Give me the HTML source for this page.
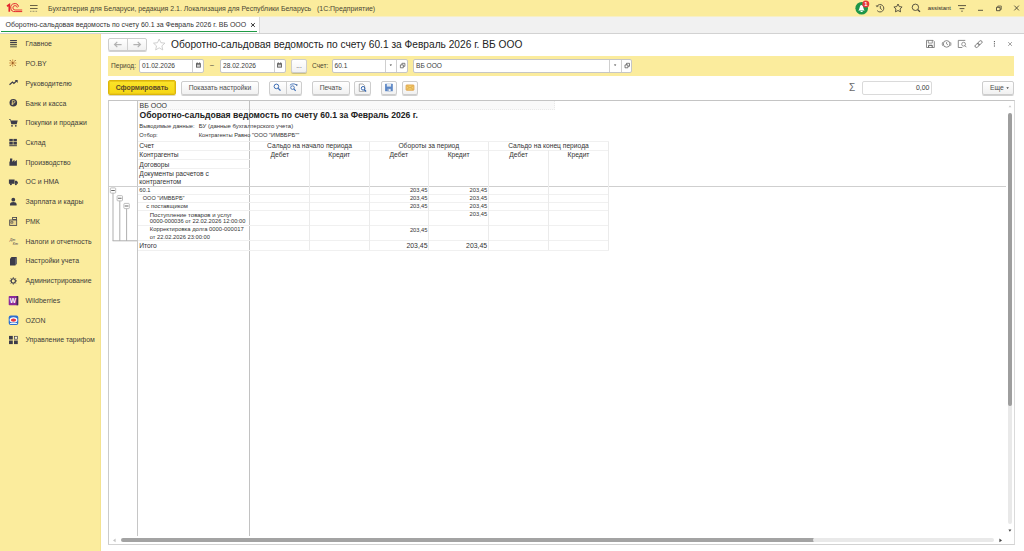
<!DOCTYPE html>
<html lang="ru"><head><meta charset="utf-8"><title>Оборотно-сальдовая ведомость</title>
<style>
*{box-sizing:border-box;margin:0;padding:0}
html,body{width:1024px;height:551px;overflow:hidden;background:#fff}
body{position:relative;font-family:"Liberation Sans",sans-serif;font-size:6.93px;color:#3a3a3a;line-height:1}
.a{position:absolute;white-space:nowrap}
#top{left:0;top:0;width:1024px;height:16px;background:#fbec9d}
#tabs{left:0;top:16px;width:1024px;height:18px;background:#f1f1f1;border-bottom:1px solid #d2d2d2}
#tab{left:0;top:16px;width:260px;height:17px;background:#fff;border-right:1px solid #d9d9d9}
#tabline{left:1px;top:31px;width:256px;height:1px;background:#1f9a44}
#side{left:0;top:34px;width:101px;height:517px;background:#fbec9d;border-right:1px solid #f4e290}
.nav{left:25.5px;color:#3d3d3a}
.btn{font-size:6.75px;border:1px solid #cdcdcd;border-radius:2px;background:linear-gradient(#fff,#f1f1f1);box-shadow:0 1px 0 rgba(0,0,0,.18);text-align:center;color:#4d4d4d}
.inp{border:1px solid #c6c6c6;border-radius:2px;background:#fff}
.vd{width:1px;background:#cfcfcf}
#band{left:108px;top:56px;width:906px;height:20px;background:#fbec9d}
#rep{left:108px;top:100px;width:906.5px;height:445px;border:1px solid;border-color:#c4c4c4 #dadada #d2d2d2 #cbcbcb;background:#fff}
.hl{height:1px;background:#f0f0f0}
.vl{width:1px;background:#ebebeb}
.s{font-size:5.75px;color:#333}
.h{font-size:6.7px;color:#333}
.r{text-align:right}
.c{text-align:center}
</style></head><body>
<div class="a" id="top"></div>
<div class="a" id="tabs"></div>
<div class="a" id="tab"></div>
<div class="a" style="left:0;top:16px;width:1024px;height:1px;background:#f7efc6"></div>
<div class="a" id="tabline"></div>
<div class="a" id="side"></div>

<!-- top bar -->
<div class="a" style="left:48px;top:5.8px;font-size:6.95px;color:#4a4633">Бухгалтерия для Беларуси, редакция 2.1. Локализация для Республики Беларусь&nbsp;&nbsp; (1С:Предприятие)</div>
<div class="a" style="left:5.5px;top:21.9px;font-size:6.97px;color:#333">Оборотно-сальдовая ведомость по счету 60.1 за Февраль 2026 г. ВБ ООО</div>
<div class="a" style="left:927.8px;top:5.6px;font-size:5.85px;color:#2b2b2b">assistant</div>

<!-- sidebar -->
<div class="a nav" style="top:41.35px">Главное</div>
<div class="a nav" style="top:61.08px">PO.BY</div>
<div class="a nav" style="top:80.81px">Руководителю</div>
<div class="a nav" style="top:100.54px">Банк и касса</div>
<div class="a nav" style="top:120.27px">Покупки и продажи</div>
<div class="a nav" style="top:140.0px">Склад</div>
<div class="a nav" style="top:159.73px">Производство</div>
<div class="a nav" style="top:179.46px">ОС и НМА</div>
<div class="a nav" style="top:199.19px">Зарплата и кадры</div>
<div class="a nav" style="top:218.92px">РМК</div>
<div class="a nav" style="top:238.65px">Налоги и отчетность</div>
<div class="a nav" style="top:258.38px">Настройки учета</div>
<div class="a nav" style="top:278.11px">Администрирование</div>
<div class="a nav" style="top:297.84px">Wildberries</div>
<div class="a nav" style="top:317.57px">OZON</div>
<div class="a nav" style="top:337.3px">Управление тарифом</div>

<!-- form header -->
<div class="a btn" style="left:108px;top:38px;width:39px;height:13px"></div>
<div class="a vd" style="left:127px;top:39px;height:11px"></div>
<div class="a" style="left:171px;top:40.2px;font-size:10.18px;color:#222">Оборотно-сальдовая ведомость по счету 60.1 за Февраль 2026 г. ВБ ООО</div>

<!-- filter band -->
<div class="a" id="band"></div>
<div class="a" style="left:111px;top:63.4px;font-size:6.6px;color:#4a4633">Период:</div>
<div class="a inp" style="left:139px;top:59px;width:65px;height:14px"></div>
<div class="a vd" style="left:192px;top:60px;height:12px"></div>
<div class="a" style="left:142px;top:63.4px;font-size:6.6px">01.02.2026</div>
<div class="a" style="left:210px;top:62px">–</div>
<div class="a inp" style="left:220px;top:59px;width:65.5px;height:14px"></div>
<div class="a vd" style="left:274px;top:60px;height:12px"></div>
<div class="a" style="left:223px;top:63.4px;font-size:6.6px">28.02.2026</div>
<div class="a btn" style="left:291px;top:59px;width:16px;height:14px;line-height:12px">...</div>
<div class="a" style="left:312px;top:63.4px;font-size:6.6px;color:#4a4633">Счет:</div>
<div class="a inp" style="left:332px;top:59px;width:76px;height:14px"></div>
<div class="a vd" style="left:385px;top:60px;height:12px"></div>
<div class="a vd" style="left:396px;top:60px;height:12px"></div>
<div class="a" style="left:334.5px;top:63.4px;font-size:6.6px">60.1</div>
<div class="a inp" style="left:413px;top:59px;width:219px;height:14px"></div>
<div class="a vd" style="left:609px;top:60px;height:12px"></div>
<div class="a vd" style="left:620.5px;top:60px;height:12px"></div>
<div class="a" style="left:416px;top:63.4px;font-size:6.6px">ВБ ООО</div>

<!-- command bar -->
<div class="a" style="left:108px;top:80px;width:68px;height:15px;border:1px solid #dcb70a;border-radius:2px;background:linear-gradient(#fbe42a,#f6d713);box-shadow:inset 0 0 0 1px #ecc918,0 1px 0 rgba(120,100,0,.25);text-align:center;line-height:13px;font-weight:bold;color:#5a4a2c">Сформировать</div>
<div class="a btn" style="left:181px;top:80.5px;width:78px;height:14px;line-height:12px">Показать настройки</div>
<div class="a btn" style="left:269px;top:80.5px;width:32.5px;height:14px"></div>
<div class="a vd" style="left:285.5px;top:81.5px;height:12px"></div>
<div class="a btn" style="left:312px;top:80.5px;width:37.5px;height:14px;line-height:12px">Печать</div>
<div class="a btn" style="left:354px;top:80.5px;width:16.5px;height:14px"></div>
<div class="a btn" style="left:381px;top:80.5px;width:15.5px;height:14px"></div>
<div class="a btn" style="left:402px;top:80.5px;width:15.5px;height:14px"></div>
<div class="a" style="left:849px;top:83.4px;font-size:10px;color:#6a6a6a">Σ</div>
<div class="a inp" style="left:862px;top:81px;width:69.5px;height:13.5px;border-color:#dadada"></div>
<div class="a" style="left:916px;top:84.5px">0,00</div>
<div class="a btn" style="left:982px;top:80.5px;width:32px;height:14px;line-height:12px;text-align:left;padding-left:7px">Еще</div>

<!-- report -->
<div class="a" id="rep"></div>
<div class="a" style="left:138px;top:101px;width:417px;height:9px;background:#f9f9f9;border-bottom:1px dotted #e9e9e9;border-right:1px dotted #e9e9e9"></div>
<div class="a" style="left:137px;top:101px;width:1px;height:435px;background:#c6c6c6"></div>
<div class="a" style="left:249px;top:101px;width:1px;height:435px;background:#c2c2c2"></div>
<div class="a" style="left:109px;top:185.5px;width:897px;height:1.5px;background:#cfcfcf"></div>
<div class="a hl" style="left:138px;top:141.0px;width:471px"></div>
<div class="a hl" style="left:138px;top:149.5px;width:471px"></div>
<div class="a hl" style="left:138px;top:158.5px;width:112px"></div>
<div class="a hl" style="left:138px;top:168.0px;width:112px"></div>
<div class="a hl" style="left:138px;top:193.7px;width:471px"></div>
<div class="a hl" style="left:138px;top:201.9px;width:471px"></div>
<div class="a hl" style="left:138px;top:210.0px;width:471px"></div>
<div class="a hl" style="left:138px;top:225.0px;width:471px"></div>
<div class="a hl" style="left:138px;top:240.2px;width:471px"></div>
<div class="a hl" style="left:138px;top:249.8px;width:471px"></div>
<div class="a vl" style="left:309.0px;top:150px;height:100.25px"></div>
<div class="a vl" style="left:368.5px;top:141.5px;height:108.75px"></div>
<div class="a vl" style="left:428.1px;top:150px;height:100.25px"></div>
<div class="a vl" style="left:488.1px;top:141.5px;height:108.75px"></div>
<div class="a vl" style="left:548.0px;top:150px;height:100.25px"></div>
<div class="a vl" style="left:608.0px;top:141.5px;height:108.75px"></div>
<div class="a" style="left:139.5px;top:101.8px;font-size:7px;color:#333">ВБ ООО</div>
<div class="a" style="left:139.5px;top:111.3px;font-size:8.6px;font-weight:bold;color:#222">Оборотно-сальдовая ведомость по счету 60.1 за Февраль 2026 г.</div>
<div class="a s" style="left:139.3px;top:123.8px">Выводимые данные:</div>
<div class="a s" style="left:198.7px;top:123.8px;font-size:5.97px">БУ (данные бухгалтерского учета)</div>
<div class="a s" style="left:139.3px;top:133.4px">Отбор:</div>
<div class="a s" style="left:198.7px;top:133.4px">Контрагенты Равно "ООО "ИМВБРБ""</div>
<div class="a h" style="left:139.3px;top:143.4px">Счет</div>
<div class="a h" style="left:139.3px;top:152.4px">Контрагенты</div>
<div class="a h" style="left:139.3px;top:161.8px">Договоры</div>
<div class="a h" style="left:139.3px;top:170.9px">Документы расчетов с</div>
<div class="a h" style="left:139.3px;top:178.9px">контрагентом</div>
<div class="a h c" style="left:249.5px;width:120px;top:143.0px">Сальдо на начало периода</div>
<div class="a h c" style="left:368.75px;width:120px;top:143.0px">Обороты за период</div>
<div class="a h c" style="left:488.5px;width:120px;top:143.0px">Сальдо на конец периода</div>
<div class="a h c" style="left:249.75px;width:60px;top:152.4px">Дебет</div>
<div class="a h c" style="left:309.25px;width:60px;top:152.4px">Кредит</div>
<div class="a h c" style="left:368.8px;width:60px;top:152.4px">Дебет</div>
<div class="a h c" style="left:428.6px;width:60px;top:152.4px">Кредит</div>
<div class="a h c" style="left:488.54999999999995px;width:60px;top:152.4px">Дебет</div>
<div class="a h c" style="left:548.5px;width:60px;top:152.4px">Кредит</div>
<div class="a s" style="left:139.3px;top:188.2px;font-size:5.75px">60.1</div>
<div class="a s" style="left:142.8px;top:196.1px;font-size:5.55px">ООО "ИМВБРБ"</div>
<div class="a s" style="left:146.3px;top:204.2px;font-size:5.95px">с поставщиком</div>
<div class="a s" style="left:149.8px;top:211.8px;font-size:6.03px">Поступление товаров и услуг</div>
<div class="a s" style="left:149.8px;top:219.2px;font-size:5.75px">0000-000036 от 22.02.2026 12:00:00</div>
<div class="a s" style="left:149.8px;top:227.4px;font-size:5.88px">Корректировка долга 0000-000017</div>
<div class="a s" style="left:149.8px;top:235.1px;font-size:5.75px">от 22.02.2026 23:00:00</div>
<div class="a h" style="left:139.3px;top:243.1px">Итого</div>
<div class="a s r" style="left:380px;width:47.5px;top:188.2px">203,45</div>
<div class="a s r" style="left:440px;width:47.2px;top:188.2px">203,45</div>
<div class="a s r" style="left:380px;width:47.5px;top:196.1px">203,45</div>
<div class="a s r" style="left:440px;width:47.2px;top:196.1px">203,45</div>
<div class="a s r" style="left:380px;width:47.5px;top:204.2px">203,45</div>
<div class="a s r" style="left:440px;width:47.2px;top:204.2px">203,45</div>
<div class="a s r" style="left:440px;width:47.2px;top:212.4px">203,45</div>
<div class="a s r" style="left:380px;width:47.5px;top:227.8px">203,45</div>
<div class="a r" style="left:380px;width:47.5px;top:243.3px;font-size:6.9px;color:#333">203,45</div>
<div class="a r" style="left:440px;width:47.2px;top:243.3px;font-size:6.9px;color:#333">203,45</div>
<svg class="a" style="left:0;top:0" width="1024" height="551" viewBox="0 0 1024 551" fill="none"><path d="M113.00 193.10V240.8" stroke="#a6a6a6" stroke-width=".9"/><rect x="110.30" y="187.90" width="5.4" height="5.2" rx=".8" fill="#fff" stroke="#adadad" stroke-width=".8"/><path d="M111.20 190.50h3.6" stroke="#555" stroke-width=".9"/><path d="M119.80 200.85V240.8" stroke="#a6a6a6" stroke-width=".9"/><rect x="117.10" y="195.65" width="5.4" height="5.2" rx=".8" fill="#fff" stroke="#adadad" stroke-width=".8"/><path d="M118.00 198.25h3.6" stroke="#555" stroke-width=".9"/><path d="M126.60 208.60V240.8" stroke="#a6a6a6" stroke-width=".9"/><rect x="123.90" y="203.40" width="5.4" height="5.2" rx=".8" fill="#fff" stroke="#adadad" stroke-width=".8"/><path d="M124.80 206.00h3.6" stroke="#555" stroke-width=".9"/><path d="M112.6 240.8H137" stroke="#a6a6a6" stroke-width=".9"/></svg>
<div class="a" style="left:121px;top:538.3px;width:694px;height:4px;border-radius:2px;background:#a3a3a3"></div>
<div class="a" style="left:813px;top:538.3px;width:181px;height:4px;border-radius:2px;background:#e9e9e9"></div>
<div class="a" style="left:1008.2px;top:400px;width:3.6px;height:123.5px;border-radius:2px;background:#e9e9e9"></div>
<div class="a" style="left:1008.2px;top:112.6px;width:3.6px;height:293.6px;border-radius:2px;background:#9e9e9e"></div>
<svg class="a" style="left:0;top:0" width="1024" height="551" viewBox="0 0 1024 551" fill="none">
<!-- 1C logo -->
<g stroke="#e3262d" stroke-width="1" fill="none">
<path d="M7 6.3 L9.3 4.6 V11.8" stroke-width="1.7"/>
<path d="M18.6 6.6 A4 4 0 1 0 15.2 11.6 H22.2"/>
<path d="M17.3 7.6 A2.2 2.2 0 1 0 15.2 10 H22.2" stroke-width=".9"/>
</g>
<!-- hamburger -->
<g stroke="#6a6246" stroke-width="1"><path d="M30 5.5H37.6M30 8.5H37.6"/><path d="M30 11.3H37.6" stroke="#9a9470" stroke-dasharray="1 .5"/></g>
<!-- bell -->
<circle cx="861.7" cy="8.3" r="6.3" fill="#1d9648"/>
<path d="M858.2 10.6c1.3-1 1.3-3.2 1.9-4.6.6-1.3 2.2-1.3 2.8 0 .6 1.4.6 3.6 1.9 4.6z" fill="#fff"/><rect x="860.6" y="11" width="2" height="1" fill="#fff"/>
<circle cx="865.800" cy="4" r="3.500" fill="#e5383b"/>
<text x="865.800" y="6.100" font-family="Liberation Sans,sans-serif" font-size="5.800" font-weight="bold" fill="#fff" text-anchor="middle">1</text>
<!-- history -->
<g stroke="#4b4638" stroke-width=".9"><path d="M877 6.2A3.7 3.7 0 1 1 877.2 10.6"/><path d="M880.3 6V8.4L881.9 9.6"/><path d="M876.2 5.2l.6 1.6 1.6-.5" stroke-width=".7"/></g>
<!-- star top -->
<path d="M898 4l1.25 2.6 2.85.4-2.05 2 .5 2.85L898 10.5l-2.55 1.35.5-2.85-2.05-2 2.85-.4z" stroke="#4b4638" stroke-width=".9" stroke-linejoin="round"/>
<!-- search top -->
<g stroke="#4b4638" stroke-width=".9"><circle cx="915.4" cy="7.3" r="3.2"/><path d="M917.8 9.7l2.2 2.1" stroke-width="1.3"/></g>
<!-- menu filter -->
<g stroke="#4b4638" stroke-width=".9"><path d="M958 5.6H966M959.6 8.6H964.4"/></g><path d="M960.9 10.7h2.2l-1.1 1.3z" fill="#4b4638"/>
<!-- window controls -->
<g stroke="#4b4638" stroke-width=".9"><path d="M978 10.3H983"/><path d="M996.5 7.3h3.6v3.4h-3.6z"/><path d="M997.8 7.2V6h3.5v3.4h-1.1" stroke-width=".7"/><path d="M1014.3 5.6l4.6 4.8M1018.9 5.6l-4.6 4.8"/></g>
<!-- tab close -->
<path d="M251 23.200l3.800 3.600M254.800 23.200l-3.800 3.600" stroke="#333" stroke-width="1"/>
<!-- nav arrows -->
<g stroke="#b2b2b2" stroke-width="1.25"><path d="M114.6 44.5H121.6M117.3 41.9L114.6 44.5 117.3 47.1"/><path d="M133.4 44.5H140.4M137.7 41.9L140.4 44.5 137.7 47.1"/></g>
<!-- fav star -->
<path d="M159.2 39l1.7 3.7 4 .45-3 2.75.85 4-3.55-2.05-3.55 2.05.85-4-3-2.75 4-.45z" stroke="#c4c4c4" stroke-width=".8" stroke-linejoin="round"/>
<!-- header icons -->
<g stroke="#6e6e6e" stroke-width=".8">
<path d="M926.5 40.4h6.6l1.2 1.2v5.9h-7.8z"/><path d="M928.3 40.5v2.6h4v-2.6" stroke-width=".7"/><path d="M928.6 47.3v-2h3.6v2" stroke="#444" stroke-width=".9"/>
<circle cx="946.6" cy="43.9" r="3.3"/><path d="M946.6 42v2l1.4.9" stroke-width=".7"/><path d="M942.6 42.2a4.6 4.6 0 0 0 0 3.6M950.6 42.2a4.6 4.6 0 0 1 0 3.6" stroke-width=".7"/>
<path d="M965.3 40.4h-7v7.1h4"/><circle cx="963.6" cy="44.2" r="1.9" stroke-width=".7"/><path d="M964.9 45.6l1.4 1.6"/>
<rect x="974.700" y="44" width="5" height="2.800" rx="1.400" transform="rotate(-40 977.200 45.400)"/><rect x="977.400" y="41.400" width="5" height="2.800" rx="1.400" transform="rotate(-40 979.900 42.800)"/>
</g>
<g fill="#555"><rect x="993.9" y="41" width="1" height="1.2"/><rect x="993.9" y="43.2" width="1" height="1.2"/><rect x="993.9" y="45.4" width="1" height="1.2"/></g>
<path d="M1008.2 42.1l3.7 3.8M1011.9 42.1l-3.7 3.8" stroke="#8a8a8a" stroke-width=".8"/>
<!-- calendars -->
<g><rect x="196" y="63.2" width="4.8" height="4.4" fill="#5a5a5a"/><rect x="196.9" y="64.6" width="3" height="2.2" fill="#cfcfcf"/><path d="M197.2 62.4v1.2M199.6 62.4v1.2" stroke="#444" stroke-width=".8"/></g>
<g transform="translate(81.1 0)"><rect x="196" y="63.2" width="4.8" height="4.4" fill="#5a5a5a"/><rect x="196.9" y="64.6" width="3" height="2.2" fill="#cfcfcf"/><path d="M197.2 62.4v1.2M199.6 62.4v1.2" stroke="#444" stroke-width=".8"/></g>
<!-- dropdown arrows + open icons -->
<path d="M389.600 64.600h2.400l-1.200 1.400z" fill="#444"/><path d="M613.900 64.600h2.400l-1.200 1.400z" fill="#444"/>
<g stroke="#555" stroke-width=".75"><path d="M400.400 64.900h2.900v2.900h-2.900z"/><path d="M401.900 64.800v-1.500h3v3h-1.500"/></g>
<g transform="translate(224.6 0)" stroke="#555" stroke-width=".75"><path d="M400.400 64.900h2.900v2.900h-2.900z"/><path d="M401.900 64.800v-1.500h3v3h-1.500"/></g>
<!-- more arrow -->
<path d="M1006.3 87.3h2.6l-1.3 1.6z" fill="#444"/>
<!-- search buttons -->
<g stroke="#3f6fb5"><circle cx="276.4" cy="86.4" r="2.3" stroke-width="1"/><path d="M278.2 88.3l2.3 2.3" stroke-width="1.3"/>
<circle cx="292.5" cy="87.6" r="1.8" stroke-width=".9"/><path d="M293.9 89l1.8 1.8" stroke-width="1.1"/><path d="M289.9 85.2c1.6-1.7 4.8-1.8 6.6-.2" stroke-width=".9"/></g><path d="M295.6 84.6l1.9-.3-.4 2z" fill="#2d4f86"/>
<!-- preview doc -->
<path d="M359.3 84h3.7l1.6 1.6v5.8h-5.3z" stroke="#8a8a8a" stroke-width=".7" fill="#fff"/>
<g stroke="#2f62ad"><circle cx="363.1" cy="88.3" r="1.8" stroke-width="1"/><path d="M364.4 89.7l1.7 1.8" stroke-width="1.2"/></g>
<!-- save -->
<rect x="385.100" y="83.800" width="7.700" height="7.400" rx=".5" fill="#5b86c5"/><rect x="386.800" y="83.800" width="4.300" height="2.800" fill="#e3e8ee"/><rect x="387.500" y="88.700" width="3.200" height="2.500" fill="#9fb4d3"/><rect x="389.100" y="89.100" width="1.400" height="1.900" fill="#f2f4f7"/>
<!-- mail -->
<rect x="406.100" y="85" width="7.800" height="5.200" rx=".6" fill="#f0cf6c" stroke="#dfa048" stroke-width=".9"/><path d="M406.600 85.500l3.400 2.500 3.400-2.500M406.600 89.800l2.500-2.200M413.400 89.800l-2.500-2.200" stroke="#dc9a44" stroke-width=".7"/>
<!-- sidebar icons -->
<g fill="#3c3c4a"><rect x="10.1" y="40" width="6.8" height="1.2"/><rect x="10.1" y="42" width="6.8" height="1.2"/><rect x="10.1" y="44" width="6.8" height="1.3" fill="#595947"/><rect x="10.1" y="46.1" width="6.8" height="1.3" fill="#77775a"/></g>
<g stroke="#c67a2e" stroke-width=".7"><path d="M12.7 59.4v7.3M9.1 63h7.3M10.2 60.5l5 5M15.2 60.5l-5 5"/></g><g fill="#7a4a20"><circle cx="12.7" cy="63" r=".8"/><circle cx="10.2" cy="60.5" r=".5"/><circle cx="15.2" cy="65.5" r=".5"/><circle cx="15.2" cy="60.5" r=".5"/><circle cx="10.2" cy="65.500" r=".5"/></g>
<path d="M9.5 84.8l3-2.8 1.4 1.4 2.8-2.6" stroke="#3c3c4a" stroke-width="1.2"/><path d="M14.8 80.1h2.9v2.9z" fill="#3c3c4a"/>
<circle cx="13.3" cy="102.7" r="3.8" fill="#3c3c4a"/><path d="M12.3 105v-4.4h1.5a1.2 1.2 0 0 1 0 2.4h-1.5M11.5 104h2" stroke="#f3dc86" stroke-width=".8"/>
<g fill="#3c3c4a"><path d="M9 119.2h1.6l.5 1.2h6.6l-1 3.8h-5.4l-1.1-4.1H9z"/><circle cx="12" cy="125.800" r=".9"/><circle cx="15.8" cy="125.8" r=".9"/></g>
<g fill="#3c3c4a"><rect x="9.300" y="138.900" width="3.500" height="2.500"/><rect x="13.400" y="138.900" width="3.500" height="2.500"/><rect x="9.300" y="142" width="3.500" height="2.600"/><rect x="13.400" y="142" width="3.500" height="2.600"/><rect x="9.300" y="145.200" width="7.600" height="1"/></g>
<path d="M9.400 165.800v-4l2.600-2v2l2.500-2v2l2.400-1.900v5.900zM10 158.500h2.300v1.900l-2.300 1.500z" fill="#3c3c4a"/>
<g fill="#3c3c4a"><rect x="8.900" y="179.500" width="5.700" height="4.300"/><path d="M15 180.800h1.700l1.200 1.500v1.500H15z"/><circle cx="10.900" cy="184.300" r="1"/><circle cx="15.900" cy="184.300" r="1"/></g>
<g fill="#3c3c4a"><circle cx="13.3" cy="199.700" r="1.900"/><path d="M10 205.500v-1.300c0-1.300 1.500-2.100 3.300-2.100s3.300.8 3.300 2.100v1.300z"/></g>
<g stroke="#3c3c4a" stroke-width=".8"><rect x="9.7" y="220" width="7" height="5.400" fill="#e8d58d"/><rect x="12.600" y="217.400" width="4" height="2.100"/><path d="M10.800 221.600h2.100v1.600h-2.100z" stroke-width=".6"/></g>
<text x="9.800" y="241" font-family="Liberation Sans,sans-serif" font-size="3.6" font-style="italic" fill="#3c3c4a">Дт</text><text x="12.800" y="245" font-family="Liberation Sans,sans-serif" font-size="3.6" font-style="italic" fill="#3c3c4a">Кт</text>
<path d="M10 258.700l1.500-1.700h5.200v6.800l-1.500 1.700H10z" fill="#3c3c4a"/><path d="M15.200 258.700l1.500-1.700v6.800l-1.500 1.700z" fill="#6a6a72"/>
<g stroke="#3c3c4a"><circle cx="13.3" cy="280.900" r="2.100" stroke-width="1.100"/><path d="M13.3 277.300v1.200M13.3 283.300v1.200M9.700 280.900h1.200M15.700 280.900h1.200M10.800 278.400l.8.8M15 282.600l.8.800M15.800 278.400l-.8.800M11.600 282.600l-.8.800" stroke-width="1"/></g>
<rect x="8.700" y="296" width="9.500" height="9.300" rx=".8" fill="#8d2b98"/><rect x="16.600" y="296" width="1.600" height="9.300" fill="#3e2a55"/><text x="12.900" y="303.100" font-family="Liberation Sans,sans-serif" font-size="6.800" font-weight="bold" fill="#fff" text-anchor="middle">W</text>
<rect x="8.700" y="315.400" width="9.600" height="9.500" rx="2" fill="#2c6fd1"/><ellipse cx="13.500" cy="319.900" rx="3.900" ry="2.700" fill="#fff"/><ellipse cx="13.500" cy="320.100" rx="2.700" ry="1.600" fill="#e23744"/><path d="M10 323.500h7" stroke="#fff" stroke-width=".9"/>
<g fill="#3c3c4a"><rect x="9" y="335.900" width="3.800" height="3.600"/><rect x="9" y="340.500" width="3.800" height="3.600"/><rect x="14" y="340.500" width="3.800" height="3.600"/></g><rect x="14.400" y="336.300" width="3.100" height="2.900" stroke="#3c3c4a" stroke-width=".7" fill="#f4efd2"/>
<!-- scroll arrows -->
<path d="M999.400 538.600l2.600 1.800-2.600 1.800z" fill="#444"/><path d="M1008.400 529.400h3l-1.500 2.300z" fill="#444"/>
<path d="M115.600 538.600l-2.600 1.800 2.600 1.800z" fill="#c4c4c4"/><path d="M1008.600 107.300h2.800l-1.400-2z" fill="#c9c9c9"/>
</svg>

</body></html>
